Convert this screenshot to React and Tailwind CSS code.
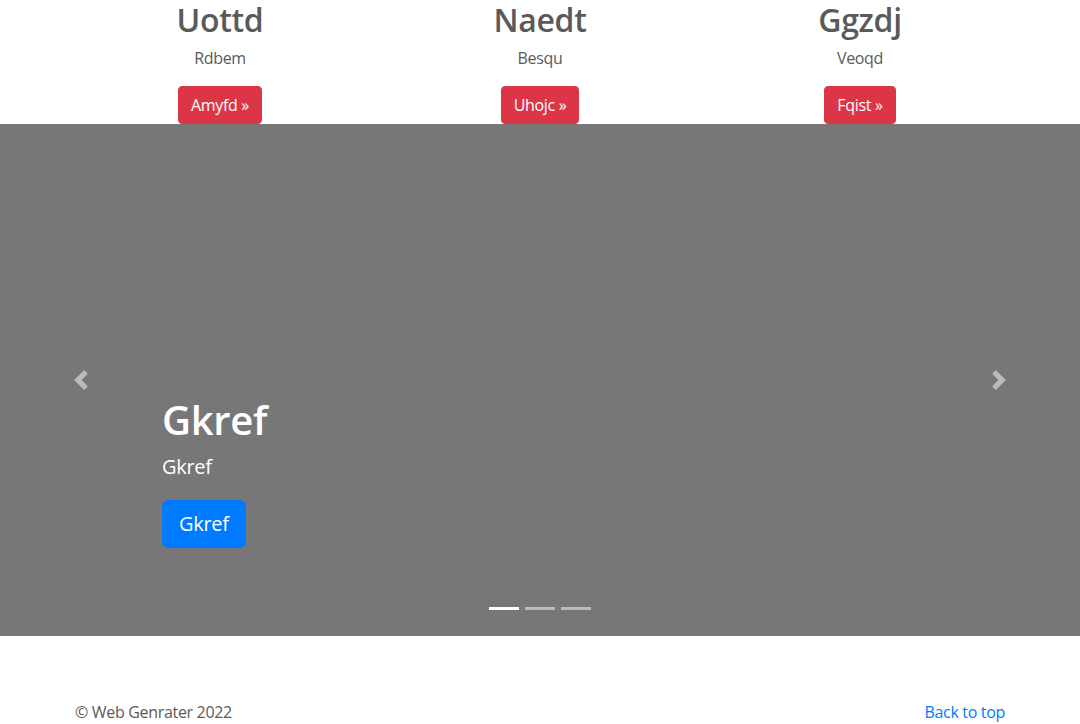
const features = [
  { title: 'Uottd', text: 'Rdbem', cta: 'Amyfd' },
  { title: 'Naedt', text: 'Besqu', cta: 'Uhojc' },
  { title: 'Ggzdj', text: 'Veoqd', cta: 'Fqist' },
];

const PrevIcon = () => (
  <svg viewBox="0 0 8 8" className="h-5 w-5" fill="#fff">
    <path d="M5.25 0l-4 4 4 4 1.5-1.5L4.25 4l2.5-2.5L5.25 0z" />
  </svg>
);

const NextIcon = () => (
  <svg viewBox="0 0 8 8" className="h-5 w-5" fill="#fff">
    <path d="M2.75 0l-1.5 1.5L3.75 4l-2.5 2.5L2.75 8l4-4-4-4z" />
  </svg>
);

export default function App() {
  return (
    <div
      className="h-[724px] overflow-hidden bg-white text-[#5a5a5a] tracking-[-0.02em]"
      style={{ fontFamily: '"Open Sans", "Noto Sans", sans-serif' }}
    >
      {/* Marketing columns */}
      <div className="mx-auto w-[960px]">
        <div className="grid grid-cols-3">
          {features.map((f) => (
            <div key={f.title} className="px-[15px] text-center">
              <h2 className="pt-[2px] text-[32px] leading-[36px] font-semibold mb-2">{f.title}</h2>
              <p className="text-base leading-6 mb-4">{f.text}</p>
              <p>
                <a
                  href="#"
                  className="inline-block rounded border border-[#dc3545] bg-[#dc3545] px-3 py-1.5 text-base leading-6 text-white"
                >
                  {f.cta} &raquo;
                </a>
              </p>
            </div>
          ))}
        </div>
      </div>

      {/* Carousel */}
      <div className="relative h-[512px] bg-[#777] flex">
        <a href="#" className="w-[15%] flex items-center justify-center opacity-50">
          <PrevIcon />
        </a>
        <div className="flex-1 flex flex-col justify-end pb-[88px] text-white">
          <h1 className="text-[40px] leading-[48px] font-semibold mb-2">Gkref</h1>
          <p className="text-xl leading-[30px] mb-[18px]">Gkref</p>
          <p>
            <a
              href="#"
              className="inline-block rounded-md border border-[#007bff] bg-[#007bff] px-4 py-2 text-xl leading-[30px] text-white"
            >
              Gkref
            </a>
          </p>
        </div>
        <a href="#" className="w-[15%] flex items-center justify-center opacity-50">
          <NextIcon />
        </a>
        <ol className="absolute bottom-[26px] left-0 right-0 flex justify-center">
          <li className="mx-[3px] h-[3px] w-[30px] bg-white" />
          <li className="mx-[3px] h-[3px] w-[30px] bg-white opacity-50" />
          <li className="mx-[3px] h-[3px] w-[30px] bg-white opacity-50" />
        </ol>
      </div>

      {/* Footer */}
      <footer className="mx-auto w-[960px] px-[15px] pt-16 flex justify-between text-base leading-6">
        <p>&copy; Web Genrater 2022</p>
        <a href="#" className="text-[#007bff]">Back to top</a>
      </footer>
    </div>
  );
}
